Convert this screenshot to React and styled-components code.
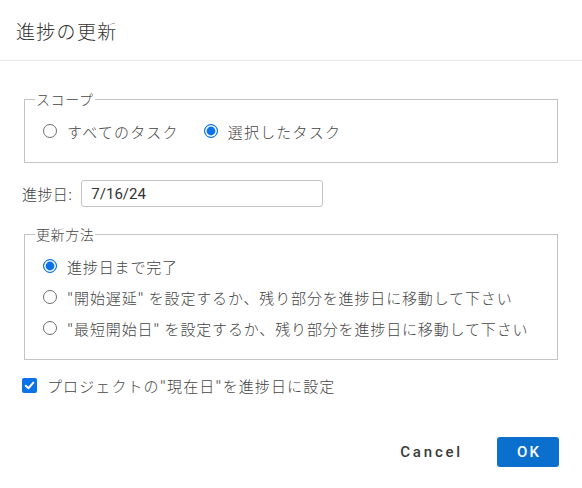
import React, { useState } from "react";
import styled, { createGlobalStyle } from "styled-components";

const Global = createGlobalStyle`
  body {
    margin: 0;
    background: #fff;
    font-family: "Noto Sans CJK JP", "Noto Sans", sans-serif;
    color: #444;
  }
`;

const BLUE = "#0b72e7";

const Dialog = styled.div`
  width: 582px;
  background: #fff;
`;

const Header = styled.div`
  height: 60px;
  padding: 0 16px;
  display: flex;
  align-items: center;
  border-bottom: 1px solid #e6e6e6;
  font-size: 19px;
  font-weight: 300;
  color: #333;
  letter-spacing: 1.3px;
`;

const Body = styled.div`
  padding: 0 22px;
`;

const Group = styled.fieldset`
  margin: ${(p) => p.$top}px 2px 0;
  padding: 12px 12px 21px 18px;
  border: 1px solid #c4c4c4;
  display: flex;
  flex-direction: ${(p) => (p.$column ? "column" : "row")};
  gap: ${(p) => (p.$column ? "11px" : "25px")};
  min-width: 0;
`;

const Legend = styled.legend`
  padding: 0 1px;
  margin-left: -8px;
  font-size: 14px;
  line-height: 20px;
  font-weight: 300;
  color: #444;
  letter-spacing: 0.6px;
`;

const Choice = styled.label`
  display: flex;
  align-items: center;
  height: 20px;
  font-size: 15px;
  font-weight: 300;
  color: #444;
  letter-spacing: ${(p) => (p.$wide ? "1.2px" : "0.85px")};
  white-space: nowrap;
  cursor: pointer;
`;

const Radio = styled.input.attrs({ type: "radio" })`
  appearance: none;
  box-sizing: border-box;
  width: 14px;
  height: 14px;
  margin: 0 10px 0 0;
  flex: none;
  border-radius: 50%;
  border: 1.5px solid #6e6e6e;
  background: #fff;
  cursor: pointer;

  &:checked {
    border: 1.5px solid ${BLUE};
    background: ${BLUE};
    box-shadow: inset 0 0 0 1.6px #fff;
  }
`;

const DateRow = styled.div`
  display: flex;
  align-items: center;
  gap: 9px;
  margin-top: 17px;
  font-size: 15px;
  font-weight: 300;
  color: #444;
  letter-spacing: 0.4px;
`;

const DateInput = styled.input`
  width: 242px;
  height: 27px;
  box-sizing: border-box;
  border: 1px solid #c4c4c4;
  border-radius: 3px;
  padding: 0 9px;
  font-family: Roboto, "Noto Sans", sans-serif;
  font-size: 15px;
  color: #333;
  outline: none;
`;

const CheckRow = styled.label`
  display: flex;
  align-items: center;
  height: 20px;
  margin-top: 15px;
  font-size: 15px;
  font-weight: 300;
  color: #444;
  letter-spacing: 1.1px;
  cursor: pointer;
`;

const HiddenInput = styled.input`
  position: absolute;
  opacity: 0;
  width: 0;
  height: 0;
  margin: 0;
`;

const CheckBox = styled.span`
  width: 15px;
  height: 15px;
  box-sizing: border-box;
  margin-right: 10px;
  border-radius: 2px;
  flex: none;
  display: flex;
  align-items: center;
  justify-content: center;
  background: ${(p) => (p.$on ? BLUE : "#fff")};
  border: ${(p) => (p.$on ? "none" : "1px solid #6e6e6e")};
`;

const Footer = styled.div`
  display: flex;
  justify-content: flex-end;
  align-items: center;
  gap: 18px;
  padding: 42px 23px 0 0;
`;

const Button = styled.button`
  height: 30px;
  min-width: ${(p) => (p.$primary ? "62px" : "0")};
  padding: 0 ${(p) => (p.$primary ? "0" : "16px")};
  border: none;
  border-radius: 3px;
  background: ${(p) => (p.$primary ? "#0b6fcd" : "transparent")};
  color: ${(p) => (p.$primary ? "#fff" : "#3a3a3a")};
  font-family: Roboto, "Noto Sans", sans-serif;
  font-size: 15px;
  font-weight: 500;
  letter-spacing: ${(p) => (p.$primary ? "2px" : "2.8px")};
  text-indent: 2px;
  cursor: pointer;
`;

function Checkbox({ checked, onChange, children }) {
  return (
    <CheckRow>
      <HiddenInput type="checkbox" checked={checked} onChange={onChange} />
      <CheckBox $on={checked}>
        {checked && (
          <svg width="11" height="11" viewBox="0 0 10 10">
            <path d="M1.6 5.2 L4 7.5 L8.5 2.4" fill="none" stroke="#fff" strokeWidth="1.8" strokeLinecap="round" strokeLinejoin="round" />
          </svg>
        )}
      </CheckBox>
      {children}
    </CheckRow>
  );
}

export default function App() {
  const [scope, setScope] = useState("selected");
  const [method, setMethod] = useState("complete");
  const [date, setDate] = useState("7/16/24");
  const [current, setCurrent] = useState(true);

  const methods = [
    { id: "complete", label: "進捗日まで完了" },
    { id: "delay", label: "\"開始遅延\" を設定するか、残り部分を進捗日に移動して下さい" },
    { id: "earliest", label: "\"最短開始日\" を設定するか、残り部分を進捗日に移動して下さい" },
  ];

  return (
    <Dialog>
      <Global />
      <Header>進捗の更新</Header>
      <Body>
        <Group $top={28}>
          <Legend>スコープ</Legend>
          <Choice $wide>
            <Radio name="scope" checked={scope === "all"} onChange={() => setScope("all")} />
            すべてのタスク
          </Choice>
          <Choice $wide>
            <Radio name="scope" checked={scope === "selected"} onChange={() => setScope("selected")} />
            選択したタスク
          </Choice>
        </Group>

        <DateRow>
          <span>進捗日:</span>
          <DateInput value={date} onChange={(e) => setDate(e.target.value)} />
        </DateRow>

        <Group $top={17} $column>
          <Legend>更新方法</Legend>
          {methods.map((m) => (
            <Choice key={m.id}>
              <Radio name="method" checked={method === m.id} onChange={() => setMethod(m.id)} />
              {m.label}
            </Choice>
          ))}
        </Group>

        <Checkbox checked={current} onChange={(e) => setCurrent(e.target.checked)}>
          プロジェクトの"現在日"を進捗日に設定
        </Checkbox>
      </Body>
      <Footer>
        <Button>Cancel</Button>
        <Button $primary>OK</Button>
      </Footer>
    </Dialog>
  );
}
